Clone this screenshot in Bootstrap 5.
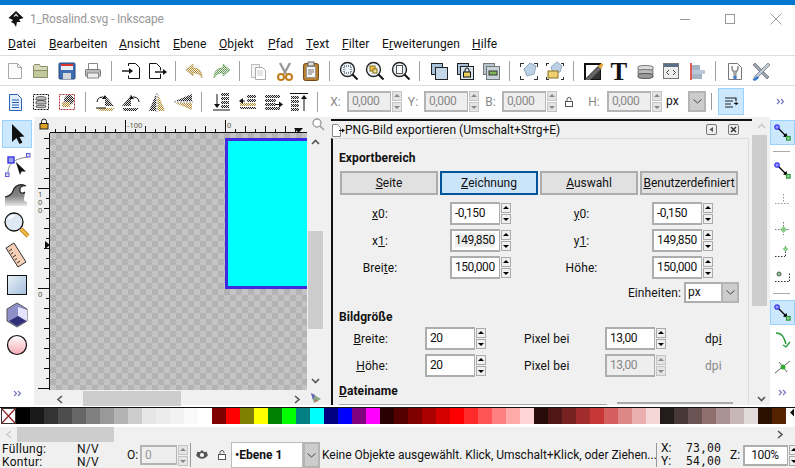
<!doctype html>
<html lang="de"><head><meta charset="utf-8"><title>1_Rosalind.svg - Inkscape</title>
<link href="https://cdn.jsdelivr.net/npm/bootstrap@5.3.0/dist/css/bootstrap.min.css" rel="stylesheet">
<script src="https://cdn.jsdelivr.net/npm/bootstrap@5.3.0/dist/js/bootstrap.bundle.min.js"></script>
<style>
html,body{margin:0;height:468px;overflow:hidden;background:#fff}
body{font:12px/16px Roboto,sans-serif;color:#111;width:795px;letter-spacing:.1px}
.defs{position:absolute;width:0;height:0}
svg{display:block;flex:none}
.winbar{height:5px;background:#0078d0}
.titlebar{height:28px;padding-left:8px}
.wintitle{color:#999;font-size:12px;margin-left:6px;letter-spacing:-.15px}
.winctl{width:45px;height:28px}
.winbtns{margin-right:-3px}
.menurow{height:23px;padding-left:8px;border-bottom:1px solid #ddd}
.tbar{height:30px;padding-left:2px;border-bottom:1px solid #ddd}
.tbar2{height:31px;border-bottom:0}
.tb{width:26px;height:26px;flex:none}
.tsep{width:12px;height:20px;flex:none}
.tsep::before{content:"";display:block;width:1px;height:20px;background:#a0a0a0;margin-left:5px}
.lab{color:#888;display:flex;justify-content:center;flex:none}
.w23{width:23px}.w22{width:22px}.w26{width:26px}.w24{width:24px}
.spf{height:21px;border:2px solid #b4b4b4;border-right-width:1px;background:#eee;color:#888;padding-left:3px;line-height:17px;width:44px;flex:none;letter-spacing:-.4px}
.spn{width:10px;height:21px;flex:none;display:flex;flex-direction:column;gap:1px;margin-left:1px}
.spn i{flex:1;background:#e4e4e4;border:1px solid #c4c4c4;position:relative;display:block}
.spn i::after{content:"";position:absolute;left:1px;border:3px solid transparent}
.spn i:first-child::after{border-bottom-color:#888;top:-1px}
.spn i:last-child::after{border-top-color:#888;top:3px}
.spn.on i{background:#f0f0f0;border-color:#aaa}
.spn.on i:first-child::after{border-bottom-color:#000}
.spn.on i:last-child::after{border-top-color:#000}
.cmbarrow{background:#ccc;border:2px solid #b4b4b4;display:flex;align-items:center;justify-content:center}
.mainarea{height:288px}
.toolcol{width:34px;padding-top:3px;position:relative}
.toolbtn{height:30px;width:34px}
.toolbtn.act{background:#cce8ff;outline:1px solid #99d1ff;outline-offset:-1px;width:30px;margin-left:2px;height:28px;margin-bottom:2px}
.canpane{width:296px;background:#f0f0f0;position:relative}
.rultop{height:13px;margin-top:3px;display:flex}
.canrow{height:257px;display:flex}
.checker{width:257px;height:257px;position:relative;overflow:hidden;background:repeating-conic-gradient(#b3b3b3 0 25%,#c4c4c4 0 50%) 0 0/12px 12px}
.cyanbox{position:absolute;left:175px;top:5px;width:100px;height:151px;background:#0ff;border:3px solid #3e2be0}
.vscroll{width:23px;padding:0 7px 0 1px;display:flex;flex-direction:column;align-items:center}
.vtrack{flex:1;width:15px;position:relative}
.thumb{background:#cdcdcd;position:absolute}
.hrow{height:16px;display:flex;position:relative;margin-top:1px}
.dlg{width:422px;background:#f0f0f0;position:relative;overflow:hidden}
.dlgbar{height:19px;margin-top:2px;border-top:2px solid #111;padding-left:14px;margin-left:1px;position:relative;letter-spacing:0}
.dlgbody{border-left:2px solid #111;margin-left:1px;height:268px;padding-left:6px;border-top:1px solid #ddd;margin-right:3px;border-right:1px solid #ddd}
.sect{font-weight:700;height:16px}
.xbtn{width:98px;height:24px;padding:0;font:12px/20px Roboto,sans-serif;border:2px solid #adadad;background:#e1e1e1;color:#111;border-radius:0}
.xbtn.sel{background:#cce4f7;border-color:#005499}
.gridA{display:grid;grid-template-columns:120px 61px 141px 61px;row-gap:4px;margin-left:-9px}
.gridB{display:grid;grid-template-columns:95px 61px 119px 61px 60px;row-gap:4px;margin-left:-9px}
.gcell{height:23px;display:flex;align-items:center}
.lblc{justify-content:center;padding-right:20px}
.lblc2{justify-content:center}
.lblr{justify-content:flex-end;padding-right:37px}
.sfield{display:flex;height:23px;width:61px}
.sval{width:50px;height:23px;background:#fff;border:2px solid #adadad;border-right-width:1px;padding-left:3px;line-height:19px;font-size:12px;flex:none;letter-spacing:-.45px}
.sval.off{background:#eee;color:#888}
.sfield .spn{height:21px;margin:1px 0 0 1px}
.hilite{background:#efefef}
.unitcmb{width:55px;height:21px;background:#fff;border:2px solid #adadad;padding-left:2px;line-height:17px;display:flex;margin-left:3px}
.scrollcol{width:18px;background:#f0f0f0;position:relative}
.snapcol{width:25px;padding-top:3px}
.snb{height:25px;width:25px;flex:none}
.snb.act{background:#cce8ff;outline:1px solid #99d1ff;outline-offset:-1px}
.sns{height:1px;background:#aaa;width:17px;margin-left:3px}
.pal{height:20px;padding:2px 0 0 0;position:relative}
.palin{height:17px;border-top:1px solid #111;display:flex;padding-left:1px}
.palin b{width:14px;height:16px;display:block;flex:none}
.hbar{height:17px;background:#f0f0f0;border-top:2px solid #fff;position:relative}
.stat{height:26px;background:#f0f0f0;position:relative;line-height:13px;font-size:12px}
.s-fill{width:127px;padding-left:2px;flex:none;letter-spacing:.3px;margin-top:1px}
.s-fill div{display:flex}.s-fill span{width:75px;flex:none}
.vsep{width:1px;height:24px;background:#999;flex:none}
.laycmb{width:72px;height:26px;background:#fff;border:1px solid #bbb;font-weight:700;padding-left:3px;line-height:24px;flex:none;letter-spacing:0}
.msg{white-space:nowrap;width:334px;flex:none;letter-spacing:-.02px}
.mono{font-family:"DejaVu Sans Mono",monospace;font-size:11.5px;letter-spacing:.1px}
.rtxt{font-family:"Noto Sans",sans-serif;font-size:7.5px;fill:#554;letter-spacing:0}
</style></head><body>
<svg class="defs"><defs>
<pattern id="dk" width="2" height="2" patternUnits="userSpaceOnUse"><rect width="2" height="2" fill="#ddd"/><rect width="1" height="1" fill="#222"/><rect x="1" y="1" width="1" height="1" fill="#222"/></pattern>
<pattern id="or" width="2" height="2" patternUnits="userSpaceOnUse"><rect width="2" height="2" fill="#eee"/><rect width="1" height="1" fill="#b8912e"/><rect x="1" y="1" width="1" height="1" fill="#b8912e"/></pattern>
<pattern id="gr" width="2" height="2" patternUnits="userSpaceOnUse"><rect width="2" height="2" fill="#eee"/><rect width="1" height="1" fill="#5e9b4e"/><rect x="1" y="1" width="1" height="1" fill="#5e9b4e"/></pattern>
<linearGradient id="gv" x1="0" y1="0" x2="0" y2="1"><stop offset="0" stop-color="#666"/><stop offset=".55" stop-color="#888"/><stop offset="1" stop-color="#e8e8e8"/></linearGradient>
<linearGradient id="gb" x1="0" y1="0" x2="1" y2="1"><stop offset="0" stop-color="#e8f0f8"/><stop offset="1" stop-color="#a3bfdc"/></linearGradient>
<linearGradient id="gp" x1="0" y1="0" x2="0" y2="1"><stop offset="0" stop-color="#fff"/><stop offset="1" stop-color="#f5aab4"/></linearGradient>
<symbol id="more" viewBox="0 0 9 7"><path d="M1 1l2.500 2.500L1 6M5 1l2.500 2.500L5 6" fill="none" stroke="#7878c0" stroke-width="1.200"/></symbol>
<symbol id="snp" viewBox="0 0 25 25"><path d="M8 8l8 8" stroke="#000" stroke-width="1.300"/><path d="M17.500 17.500l-4.500-1 3.500-3.500z" fill="#000"/><circle cx="7" cy="7" r="2.200" fill="#9a9aff" stroke="#3a3af0" stroke-width="1.300"/><rect x="16.500" y="16.500" width="3.600" height="3.600" fill="#9fd89f" stroke="#2a9a3a" stroke-width="1.200"/></symbol>
</defs></svg>

<div class="winbar"></div>
<div class="titlebar d-flex align-items-center">
 <svg width="16" height="17" viewBox="0 0 16 17"><path d="M8 0L15.500 7 11 8.500 12.500 11 9 11 8 16 6 12.500 3 11 5 9 .5 7z" fill="#111"/><path d="M8 2.500L5.500 5.500 7 5.500 8 4.300 9 5.500 10.500 5.500z" fill="#fff"/></svg>
 <span class="wintitle">1_Rosalind.svg - Inkscape</span>
 <div class="ms-auto d-flex winbtns">
  <div class="winctl d-flex align-items-center justify-content-center"><svg width="11" height="11"><path d="M0 5.500h10" stroke="#999"/></svg></div>
  <div class="winctl d-flex align-items-center justify-content-center"><svg width="11" height="11"><rect x=".5" y=".5" width="9" height="9" fill="none" stroke="#999"/></svg></div>
  <div class="winctl d-flex align-items-center justify-content-center"><svg width="12" height="12"><path d="M.5.500l11 11M11.500.500l-11 11" stroke="#999"/></svg></div>
 </div>
</div>
<div class="menurow d-flex align-items-center">
 <span style="width:41px"><u>D</u>atei</span><span style="width:70px"><u>B</u>earbeiten</span><span style="width:54px"><u>A</u>nsicht</span><span style="width:46px"><u>E</u>bene</span><span style="width:49px"><u>O</u>bjekt</span><span style="width:38px"><u>P</u>fad</span><span style="width:36px"><u>T</u>ext</span><span style="width:40px"><u>F</u>ilter</span><span style="width:90px">E<u>r</u>weiterungen</span><span><u>H</u>ilfe</span>
</div>

<div class="tbar d-flex align-items-center">
 <div class="tb"><svg width="26" height="26" viewBox="0 0 26 26"><path d="M6.500 5.500h9l4 4v11h-13z" fill="#fbfbfb" stroke="#aaa"/><path d="M15.500 5.500v4h4" fill="none" stroke="#aaa"/></svg></div>
 <div class="tb"><svg width="26" height="26" viewBox="0 0 26 26"><path d="M5.500 19.500v-12l1-1h5l1 2h7v11z" fill="#d5d9b8" stroke="#8a8f6a"/><path d="M5.500 19.500v-7h14v7z" fill="#c2c79c" stroke="#8a8f6a"/></svg></div>
 <div class="tb"><svg width="26" height="26" viewBox="0 0 26 26"><rect x="5" y="5" width="16" height="16" rx="1" fill="#3f6fb0" stroke="#24497c"/><rect x="7" y="6" width="12" height="6" fill="#e8eef5"/><rect x="7" y="6" width="12" height="2" fill="#d33"/><rect x="9" y="15" width="8" height="6" fill="#d6d6d6"/></svg></div>
 <div class="tb"><svg width="26" height="26" viewBox="0 0 26 26"><path d="M8.500 11.500v-6h9v6" fill="#fff" stroke="#888"/><rect x="5.500" y="11.500" width="15" height="7" rx="1" fill="#bbb" stroke="#777"/><rect x="7.500" y="15" width="11" height="5" fill="#eee" stroke="#888"/></svg></div>
 <div class="tsep"></div>
 <div class="tb"><svg width="26" height="26" viewBox="0 0 26 26"><path d="M10.500 8v-2.500h7l4 4v11h-11v-3" fill="#fff" stroke="#111"/><path d="M4 13h10" stroke="#111" stroke-width="1.400"/><path d="M15 13l-4-3v6z" fill="#111"/></svg></div>
 <div class="tb"><svg width="26" height="26" viewBox="0 0 26 26"><path d="M5.500 5.500h7l4 4v3M16.500 16v4.500h-11v-15" fill="#fff" stroke="#111"/><path d="M11 14h9" stroke="#111" stroke-width="1.400"/><path d="M23 14l-4-3v6z" fill="#111"/></svg></div>
 <div class="tsep"></div>
 <div class="tb"><svg width="26" height="26" viewBox="0 0 26 26"><path d="M4 12l7-6v4c6 0 9 3 9 10-2-4-5-5-9-5v3z" fill="url(#or)" stroke="#a98b3a" stroke-width=".5"/></svg></div>
 <div class="tb"><svg width="26" height="26" viewBox="0 0 26 26"><path d="M22 12l-7-6v4c-6 0-9 3-9 10 2-4 5-5 9-5v3z" fill="url(#gr)" stroke="#5e9b4e" stroke-width=".5"/></svg></div>
 <div class="tsep"></div>
 <div class="tb"><svg width="26" height="26" viewBox="0 0 26 26"><path d="M5.500 6.500h8v13h-8z" fill="#f5f5f5" stroke="#bbb"/><path d="M9.500 9.500h7l3 3v9h-10z" fill="#fff" stroke="#aaa"/><path d="M11 13h6M11 15h6M11 17h6" stroke="#ccc"/></svg></div>
 <div class="tb"><svg width="26" height="26" viewBox="0 0 26 26"><path d="M8 5l6 11M18 5l-6 11" stroke="#999" stroke-width="2.400"/><circle cx="9" cy="19" r="3" fill="#fff" stroke="#c07d1a" stroke-width="2"/><circle cx="17" cy="19" r="3" fill="#fff" stroke="#c07d1a" stroke-width="2"/></svg></div>
 <div class="tb"><svg width="26" height="26" viewBox="0 0 26 26"><rect x="5.500" y="5.500" width="15" height="17" rx="2" fill="#b8802f" stroke="#6e4a16"/><path d="M8.500 8.500h9v11h-9z" fill="#f7f7f7" stroke="#999"/><rect x="10" y="4" width="6" height="4" fill="#ddd" stroke="#666"/><path d="M10 12h6M10 14h6M10 16h4" stroke="#777"/></svg></div>
 <div class="tsep"></div>
 <div class="tb"><svg width="26" height="26" viewBox="0 0 26 26"><circle cx="11.500" cy="11.500" r="7" fill="#eaf2fa" stroke="#222" stroke-width="1.400"/><rect x="8" y="8" width="7" height="7" fill="none" stroke="#333" stroke-dasharray="1 1"/><path d="M16.500 16.500l5 5" stroke="#111" stroke-width="2"/></svg></div>
 <div class="tb"><svg width="26" height="26" viewBox="0 0 26 26"><circle cx="11.500" cy="11.500" r="7" fill="#eaf2fa" stroke="#222" stroke-width="1.400"/><rect x="8" y="8" width="5" height="5" fill="#f3c94b" stroke="#8a6d10"/><rect x="11" y="11" width="4" height="4" fill="#f6e39a" stroke="#8a6d10"/><path d="M16.500 16.500l5 5" stroke="#111" stroke-width="2"/></svg></div>
 <div class="tb"><svg width="26" height="26" viewBox="0 0 26 26"><circle cx="11.500" cy="11.500" r="7" fill="#eaf2fa" stroke="#222" stroke-width="1.400"/><rect x="8.500" y="7.500" width="6" height="8" fill="#fff" stroke="#555"/><path d="M16.500 16.500l5 5" stroke="#111" stroke-width="2"/></svg></div>
 <div class="tsep"></div>
 <div class="tb"><svg width="26" height="26" viewBox="0 0 26 26"><rect x="5.500" y="5.500" width="11" height="11" fill="#a9c2da" stroke="#222"/><rect x="9.500" y="9.500" width="12" height="12" fill="#c4d8ea" stroke="#222"/></svg></div>
 <div class="tb"><svg width="26" height="26" viewBox="0 0 26 26"><rect x="5.500" y="5.500" width="11" height="11" fill="#a9c2da" stroke="#222"/><rect x="8.500" y="8.500" width="13" height="13" fill="#d6e4f0" stroke="#222"/><rect x="11.500" y="14" width="7" height="5" fill="#e8d060" stroke="#111"/><path d="M13 14v-2a2 2 0 0 1 4 0v2" fill="none" stroke="#111"/></svg></div>
 <div class="tb"><svg width="26" height="26" viewBox="0 0 26 26"><rect x="5.500" y="5.500" width="11" height="11" fill="#b8c6d2" stroke="#777"/><rect x="8.500" y="8.500" width="13" height="13" fill="#c8d4dc" stroke="#777"/><rect x="11" y="13" width="8" height="4" fill="#7fb35a" stroke="#333"/></svg></div>
 <div class="tsep"></div>
 <div class="tb"><svg width="26" height="26" viewBox="0 0 26 26"><path d="M8 11l6-6 6 3-2 8-7 2z" fill="#bcd0e6" stroke="#90a6bf"/><path d="M4 5h4v1H5v3H4zM18 5h4v4h-1V6h-3zM4 18h1v3h3v1H4zM21 18h1v4h-4v-1h3z" fill="#333"/></svg></div>
 <div class="tb"><svg width="26" height="26" viewBox="0 0 26 26"><path d="M9 9l6-5 5 4-2 6-7 1z" fill="#bcd0e6" stroke="#90a6bf"/><rect x="6" y="13" width="10" height="7" fill="#f0d070" stroke="#8a7020"/><path d="M4 5h3v1H5v2H4zM19 5h3v3h-1V6h-2zM4 19h1v2h2v1H4zM21 19h1v3h-3v-1h2z" fill="#333"/></svg></div>
 <div class="tsep"></div>
 <div class="tb"><svg width="26" height="26" viewBox="0 0 26 26"><rect x="5" y="6" width="15" height="15" fill="#fff" stroke="#111" stroke-width="2"/><path d="M5 21L20 6v15z" fill="#333"/><path d="M5 22L19 8l3 2-12 12z" fill="#666"/><path d="M18 8l4-3 1.500 2-3 4z" fill="#e8a53a"/></svg></div>
 <div class="tb d-flex align-items-center justify-content-center"><svg width="26" height="26" viewBox="0 0 26 26"><text x="13" y="22" text-anchor="middle" font-family="Liberation Serif,serif" font-weight="700" font-size="25" fill="#111">T</text></svg></div>
 <div class="tb"><svg width="26" height="26" viewBox="0 0 26 26"><path d="M6 9c0-2 14-2 15 0v3H6z" fill="#ddd" stroke="#777"/><path d="M6 13c0-2 14-2 15 0v3H6z" fill="#bbb" stroke="#777"/><path d="M6 17c0-2 14-2 15 0v2c-1 2-15 2-15 0z" fill="#999" stroke="#555"/></svg></div>
 <div class="tb"><svg width="26" height="26" viewBox="0 0 26 26"><rect x="5.500" y="5.500" width="15" height="15" fill="#eee" stroke="#777"/><rect x="6" y="6" width="14" height="3" fill="#5c6f87"/><path d="M11 12l-2.500 2.500L11 17M15 12l2.500 2.500L15 17" fill="none" stroke="#444"/></svg></div>
 <div class="tb"><svg width="26" height="26" viewBox="0 0 26 26"><rect x="6" y="5" width="2" height="17" fill="#e05a5a"/><rect x="8" y="7" width="8" height="5" fill="#a5b5c5"/><rect x="8" y="12" width="13" height="4" fill="#b9c9d9"/><rect x="8" y="16" width="10" height="5" fill="#a5b5c5"/></svg></div>
 <div class="tsep"></div>
 <div class="tb"><svg width="26" height="26" viewBox="0 0 26 26"><path d="M6.500 5.500h9l4 4v12h-13z" fill="#fcfcfc" stroke="#777"/><path d="M10 8c0 4 1 5 3 5s3-1 3-5v4l-2 3v5h-2v-5l-2-3z" fill="#bbb" stroke="#555" stroke-width=".6"/><rect x="11.500" y="18" width="3" height="3" fill="#3a7fd0"/></svg></div>
 <div class="tb"><svg width="26" height="26" viewBox="0 0 26 26"><path d="M7 5l14 14-2 2L5 7z" fill="#9aa6b2" stroke="#555" stroke-width=".6"/><path d="M20 5l-13 13-2 4 4-2 13-13z" fill="#c2ccd6" stroke="#556" stroke-width=".6"/><path d="M5 22l4-4 2 2-4 3z" fill="#2f78d0"/></svg></div>
</div>

<div class="tbar tbar2 d-flex align-items-center">
 <div class="tb"><svg width="26" height="26" viewBox="0 0 26 26"><path d="M7.500 5.500h8l4 4v12h-12z" fill="#e3eefa" stroke="#2a62b5"/><path d="M10 11h7M10 13.500h7M10 16h7M10 18.500h7" stroke="#2a62b5"/></svg></div>
 <div class="tb"><svg width="26" height="26" viewBox="0 0 26 26"><rect x="5.500" y="5.500" width="15" height="15" fill="#fff" stroke="#111" stroke-dasharray="2 1"/><path d="M8 9c0-2 10-2 10 0v2H8zM8 13c0-2 10-2 10 0v2H8zM8 17c0-1 10-1 10 0v1c0 1-10 1-10 0z" fill="#bbb" stroke="#333" stroke-width=".7"/></svg></div>
 <div class="tb"><svg width="26" height="26" viewBox="0 0 26 26"><rect x="5.500" y="5.500" width="15" height="15" fill="#fff" stroke="#a33" stroke-dasharray="2 1"/><circle cx="15" cy="11" r="5" fill="url(#dk)"/><rect x="8" y="13" width="8" height="5" fill="url(#or)"/></svg></div>
 <div class="tsep"></div>
 <div class="tb"><svg width="26" height="26" viewBox="0 0 26 26"><path d="M13 6v11H22z" fill="url(#dk)"/><path d="M5 19h17l-2 3H8z" fill="url(#or)"/><path d="M5 13a5 5 0 0 1 8-4" fill="none" stroke="#111"/><path d="M13 6l1 4-4 0z" fill="#111"/><path d="M4 19h10" stroke="#111"/></svg></div>
 <div class="tb"><svg width="26" height="26" viewBox="0 0 26 26"><path d="M13 6v11H4z" fill="url(#dk)"/><path d="M21 19H4l2 3h12z" fill="url(#dk)"/><path d="M21 13a5 5 0 0 0-8-4" fill="none" stroke="#111"/><path d="M13 6l-1 4 4 0z" fill="#111"/></svg></div>
 <div class="tb"><svg width="26" height="26" viewBox="0 0 26 26"><path d="M12 5v17H5z" fill="url(#dk)"/><path d="M14 5v17h7z" fill="url(#or)"/><path d="M13 4v19" stroke="#888" stroke-dasharray="2 1"/></svg></div>
 <div class="tb"><svg width="26" height="26" viewBox="0 0 26 26"><path d="M5 12h17V5z" fill="url(#dk)"/><path d="M5 14h17v7z" fill="url(#or)"/><path d="M4 13h19" stroke="#888" stroke-dasharray="2 1"/></svg></div>
 <div class="tsep"></div>
 <div class="tb"><svg width="26" height="26" viewBox="0 0 26 26"><path d="M13 4h8v3h-8zM13 8h8v3h-8zM13 12h8v3h-8zM13 16h8v3h-8z" fill="url(#dk)"/><path d="M9 5v13" stroke="#111"/><path d="M9 19l-3-4h6z" fill="#111"/><path d="M5 21h17" stroke="#111"/></svg></div>
 <div class="tb"><svg width="26" height="26" viewBox="0 0 26 26"><path d="M13 6h9v3h-9zM13 10h9v3h-9zM6 18h16v2H6z" fill="url(#dk)"/><path d="M6 14h16v3H6z" fill="url(#or)"/><path d="M6 12h5" stroke="#111"/><path d="M5 12l4-3v6z" fill="#111"/></svg></div>
 <div class="tb"><svg width="26" height="26" viewBox="0 0 26 26"><path d="M5 6h15v3H5zM5 10h11v3H5zM5 14h11v3H5zM5 18h15v3H5z" fill="url(#dk)"/><path d="M16 15.500h4" stroke="#111"/><path d="M23 15.500l-4-3v6z" fill="#111"/></svg></div>
 <div class="tb"><svg width="26" height="26" viewBox="0 0 26 26"><path d="M5 7h8v3H5zM5 11h8v3H5zM5 15h8v3H5zM5 19h8v3H5z" fill="url(#dk)"/><path d="M4 4.500h18" stroke="#111"/><path d="M18 9v13" stroke="#111"/><path d="M18 6l-3 4h6z" fill="#111"/></svg></div>
 <div class="tsep"></div>
 <span class="lab w23">X:</span>
 <div class="spf">0,000</div><div class="spn"><i></i><i></i></div>
 <span class="lab w22">Y:</span>
 <div class="spf">0,000</div><div class="spn"><i></i><i></i></div>
 <span class="lab w23">B:</span>
 <div class="spf">0,000</div><div class="spn"><i></i><i></i></div>
 <div class="w24 d-flex justify-content-center flex-none"><svg width="10" height="12" viewBox="0 0 10 12"><rect x="1.500" y="5.500" width="7" height="5" fill="#fff" stroke="#555"/><path d="M3 5.500V3.500a2 2 0 0 1 4 0v1" fill="none" stroke="#555"/></svg></div>
 <span class="lab w26">H:</span>
 <div class="spf">0,000</div><div class="spn"><i></i><i></i></div>
 <div class="d-flex" style="height:21px;width:43px;background:#fff;margin-left:1px"><span style="padding:2px 0 0 3px;width:25px">px</span><div class="cmbarrow" style="width:18px"><svg width="9" height="5"><path d="M.5.500l4 3.500 4-3.500" fill="none" stroke="#444"/></svg></div></div>
 <div class="vsep" style="margin:0 6px 0 5px;height:17px"></div>
 <div class="tb d-flex align-items-center justify-content-center" style="background:#cce8ff;outline:1px solid #99d1ff;outline-offset:-1px;height:27px"><svg width="15" height="12" viewBox="0 0 15 12"><path d="M1 2h11v3M1 5h8M1 8h6M1 11h8" stroke="#222" stroke-width="1.200" fill="none"/><path d="M10 7.500h3" stroke="#222"/><path d="M14.500 7.500l-3-2v4z" fill="#222"/></svg></div>
 <svg class="ms-auto" style="margin-right:10px" width="9" height="7"><use href="#more"/></svg>
</div>

<div class="mainarea d-flex">
 <div class="toolcol d-flex flex-column">
  <div class="toolbtn act d-flex align-items-center justify-content-center"><svg width="18" height="24" viewBox="0 0 18 24"><path d="M4 2v18l4.500-4 3 6 3-1.500-3-5.500 5-.5z" fill="#111"/></svg></div>
  <div class="toolbtn d-flex align-items-center justify-content-center"><svg width="30" height="30" viewBox="0 0 30 30"><path d="M6 24c0-8 3-15 20-17" fill="none" stroke="#888"/><rect x="6" y="7" width="6" height="6" fill="#9ca0f0" stroke="#2a2ae0" stroke-width="1.300"/><rect x="24.500" y="3.500" width="3.500" height="3.500" fill="#ddd" stroke="#5a5ae0"/><rect x="3.500" y="23" width="3.500" height="3.500" fill="#ddd" stroke="#5a5ae0"/><path d="M13.700 11.700L24 21.600l-4.500-.1L18 25z" fill="#111"/></svg></div>
  <div class="toolbtn d-flex align-items-center justify-content-center"><svg width="26" height="26" viewBox="0 0 26 26"><path d="M1 24V15c5-1 7-3 8-6 2-6 8-8 13-5-3-1-7 1-6 5 0 2 3 3 5 1 0 2-1 5-1 7 0 2 1 3 3 3v4z" fill="url(#gv)"/><path d="M1 15c5-1 7-3 8-6 2-6 8-8 13-5-3-1-7 1-6 5 0 2 3 3 5 1" fill="none" stroke="#222" stroke-width="1.200"/></svg></div>
  <div class="toolbtn d-flex align-items-center justify-content-center"><svg width="28" height="28" viewBox="0 0 28 28"><circle cx="11" cy="11" r="9" fill="#dfe9f5" stroke="#111" stroke-width="1.300"/><path d="M6 8c1-2 3-3 5-3" stroke="#fff" stroke-width="2" fill="none"/><path d="M18 18l7 7" stroke="#b8791a" stroke-width="4"/><path d="M18 18l7 7" stroke="#f5c13e" stroke-width="2.400"/></svg></div>
  <div class="toolbtn d-flex align-items-center justify-content-center"><svg width="26" height="26" viewBox="0 0 26 26"><path d="M2 6l8-5 12 19-8 5z" fill="#f6cfb6" stroke="#333"/><path d="M5 9l3-2M7 12l2-1.500M9 15l3-2M11 18l2-1.500M13 21l3-2" stroke="#333"/></svg></div>
  <div class="toolbtn d-flex align-items-center justify-content-center"><svg width="22" height="22" viewBox="0 0 22 22"><rect x="1.500" y="1.500" width="19" height="19" fill="url(#gb)" stroke="#111"/></svg></div>
  <div class="toolbtn d-flex align-items-center justify-content-center"><svg width="24" height="26" viewBox="0 0 24 26"><path d="M12 1l10 6v12l-10 6L2 19V7z" fill="#9090c8" stroke="#555"/><path d="M13 5l9 3v11l-9-5z" fill="#e4e4ff"/><path d="M4 19l9-5 8 5-9 5z" fill="#30307a"/></svg></div>
  <div class="toolbtn d-flex align-items-center justify-content-center"><svg width="22" height="22" viewBox="0 0 22 22"><circle cx="11" cy="11" r="9.500" fill="url(#gp)" stroke="#111" stroke-width="1.200"/></svg></div>
  <svg class="mt-auto" style="margin:0 0 8px 13px" width="9" height="7"><use href="#more"/></svg>
 </div>

 <div class="canpane">
  <div class="rultop">
   <div style="width:16px;padding:0 0 0 2px"><svg style="margin:-2px 0 0 2px" width="12" height="12" viewBox="0 0 12 12"><rect x="2" y="5.500" width="8" height="5.500" fill="#e0a020" stroke="#222"/><path d="M3.500 5.500v-2a2.500 2.500 0 0 1 5 0v2" fill="none" stroke="#222"/></svg></div>
   <svg width="257" height="13" viewBox="0 0 257 13">
    <path d="M0 12.500h257" stroke="#111"/>
    <path d="M5.500 12V9M15.500 12V6M25.500 12V9M35.500 12V6M45.500 12V9M55.500 12V6M65.500 12V9M75.500 12V0M85.500 12V9M95.500 12V6M105.500 12V9M115.500 12V6M125.500 12V9M135.500 12V6M145.500 12V9M155.500 12V6M165.500 12V9M175.500 12V0M185.500 12V9M195.500 12V6M205.500 12V9M215.500 12V6M225.500 12V9M235.500 12V6M245.500 12V9" stroke="#111"/>
    <text class="rtxt" x="77" y="8">-100</text>
    <text class="rtxt" x="177" y="8">0</text>
    <path d="M244 8h9l-4.500 5z" fill="#111"/>
   </svg>
   <div style="width:23px"><svg style="margin:-3px 0 0 4px" width="14" height="14" viewBox="0 0 14 14"><circle cx="6" cy="6" r="4" fill="#fff" stroke="#999" stroke-width="1.300"/><path d="M9 9l4 4" stroke="#999" stroke-width="1.500"/></svg></div>
  </div>
  <div class="canrow">
   <svg width="16" height="257" viewBox="0 0 16 257">
    <path d="M15.500 0v257" stroke="#111"/>
    <path d="M10 5.500h5M12 15.500h3M10 25.500h5M12 35.500h3M10 45.500h5M4 55.500h11M12 65.500h3M10 75.500h5M12 85.500h3M10 95.500h5M12 105.500h3M10 115.500h5M12 125.500h3M10 135.500h5M12 145.500h3M4 155.500h11M12 165.500h3M10 175.500h5M12 185.500h3M10 195.500h5M12 205.500h3M10 215.500h5M12 225.500h3M10 235.500h5M12 245.500h3M4 255.500h11" stroke="#111"/>
    <text class="rtxt" x="4" y="64">1</text>
    <text class="rtxt" x="4" y="72">0</text>
    <text class="rtxt" x="4" y="80">0</text>
    <text class="rtxt" x="4" y="164">0</text>
    <path d="M11 108l5 4-5 4z" fill="#111"/>
   </svg>
   <div class="checker"><div class="cyanbox"></div></div>
   <div class="vscroll"><div class="vtrack">
     <svg style="margin:6px 0 0 3px" width="9" height="6"><path d="M1 5l3.500-3.500L8 5" fill="none" stroke="#555" stroke-width="1.600"/></svg>
     <div class="thumb" style="left:0;right:0;top:98px;height:98px"></div>
     <svg style="position:absolute;left:3px;bottom:6px" width="9" height="6"><path d="M1 1l3.500 3.500L8 1" fill="none" stroke="#555" stroke-width="1.600"/></svg>
   </div></div>
  </div>
  <div class="hrow">
   <svg style="position:absolute;left:22px;top:4px" width="7" height="9"><path d="M6 1L2 4.500 6 8" fill="none" stroke="#555" stroke-width="1.600"/></svg>
   <div class="thumb" style="left:49px;width:98px;top:0;height:15px"></div>
   <svg style="position:absolute;left:260px;top:4px" width="7" height="9"><path d="M1 1l4 3.500L1 8" fill="none" stroke="#555" stroke-width="1.600"/></svg>
   <svg style="position:absolute;left:276px;top:1px" width="12" height="12"><path d="M1 1l10 6-7 4z" fill="#8a8"/><path d="M1 1l4 2-2 5z" fill="#66b"/><path d="M5 7l3 2-3 1z" fill="#c66"/></svg>
  </div>
 </div>

 <div class="dlg">
  <div class="dlgbar d-flex align-items-center">
   <svg style="position:absolute;left:0;top:3px" width="14" height="13" viewBox="0 0 14 13"><path d="M1.500.500h5l3 3v9h-8z" fill="#fff" stroke="#888"/><path d="M8 6.500h5" stroke="#111"/><path d="M14 6.500l-3-2v4z" fill="#111"/></svg>
   <span>PNG-Bild exportieren (Umschalt+Strg+E)</span>
   <svg class="ms-auto" width="12" height="12" viewBox="0 0 12 12"><rect x=".5" y=".5" width="10" height="10" rx="1.500" fill="#eee" stroke="#777"/><path d="M3.500 5.500L7 3v5z" fill="#555"/></svg>
   <svg style="margin:0 12px 0 10px" width="12" height="12" viewBox="0 0 12 12"><rect x=".5" y=".5" width="10" height="10" rx="1.500" fill="#eee" stroke="#777"/><path d="M3 3l5 5M8 3L3 8" stroke="#333" stroke-width="1.500"/></svg>
  </div>
  <div class="dlgbody">
   <div class="sect" style="margin-top:11px">Exportbereich</div>
   <div class="d-flex" style="margin:5px 0 7px 1px;gap:2px">
    <button class="btn xbtn" type="button"><u>S</u>eite</button><button class="btn xbtn sel" type="button"><u>Z</u>eichnung</button><button class="btn xbtn" type="button"><u>A</u>uswahl</button><button class="btn xbtn" type="button"><u>B</u>enutzerdefiniert</button>
   </div>
   <div class="gridA">
    <div class="gcell lblc"><span><u>x</u>0:</span></div><div class="sfield"><div class="sval">-0,150</div><div class="spn on"><i></i><i></i></div></div><div class="gcell lblc2"><span><u>y</u>0:</span></div><div class="sfield"><div class="sval">-0,150</div><div class="spn on"><i></i><i></i></div></div>
    <div class="gcell lblc"><span>x<u>1</u>:</span></div><div class="sfield"><div class="sval"><span class="hilite">149,850</span></div><div class="spn on"><i></i><i></i></div></div><div class="gcell lblc2"><span>y<u>1</u>:</span></div><div class="sfield"><div class="sval">149,850</div><div class="spn on"><i></i><i></i></div></div>
    <div class="gcell lblc"><span>Brei<u>t</u>e:</span></div><div class="sfield"><div class="sval">150,000</div><div class="spn on"><i></i><i></i></div></div><div class="gcell lblc2"><span>Höhe:</span></div><div class="sfield"><div class="sval">150,000</div><div class="spn on"><i></i><i></i></div></div>
   </div>
   <div class="d-flex align-items-center justify-content-end" style="margin:3px 9px 0 0;height:21px">
    <span>Einheiten:</span><div class="unitcmb"><span style="flex:1">px</span><div class="cmbarrow" style="width:18px;margin:-2px -2px -2px 0"><svg width="9" height="5"><path d="M.5.500l4 3.500 4-3.500" fill="none" stroke="#444"/></svg></div></div>
   </div>
   <div class="sect" style="margin:6px 0 2px">Bildgröße</div>
   <div class="gridB">
    <div class="gcell lblr"><span><u>B</u>reite:</span></div><div class="sfield"><div class="sval">20</div><div class="spn on"><i></i><i></i></div></div><div class="gcell" style="padding-left:38px">Pixel bei</div><div class="sfield"><div class="sval">13,00</div><div class="spn on"><i></i><i></i></div></div><div class="gcell" style="padding-left:39px">dp<u>i</u></div>
    <div class="gcell lblr"><span><u>H</u>öhe:</span></div><div class="sfield"><div class="sval">20</div><div class="spn on"><i></i><i></i></div></div><div class="gcell" style="padding-left:38px">Pixel bei</div><div class="sfield"><div class="sval off">13,00</div><div class="spn"><i></i><i></i></div></div><div class="gcell" style="padding-left:39px;color:#888">dpi</div>
   </div>
   <div class="sect" style="margin-top:6px"><u>D</u>ateiname</div>
   <div class="d-flex" style="margin-top:3px"><div style="width:268px;height:2px;margin-top:2px;background:#aaa"></div><div style="margin-left:10px;width:116px;height:2px;background:#aaa"></div></div>
  </div>
 </div>

 <div class="scrollcol">
  <svg style="position:absolute;left:5px;top:6px" width="9" height="6"><path d="M1 5l3.500-3.500L8 5" fill="none" stroke="#ccc" stroke-width="1.600"/></svg>
  <div class="thumb" style="left:0;width:15px;top:18px;height:171px"></div>
  <svg style="position:absolute;left:5px;bottom:3px" width="9" height="6"><path d="M1 1l3.500 3.500L8 1" fill="none" stroke="#555" stroke-width="1.600"/></svg>
 </div>
 <div class="snapcol d-flex flex-column">
  <div class="snb act"><svg width="25" height="25"><use href="#snp"/></svg></div>
  <div class="sns" style="margin-top:6px"></div>
  <div class="snb" style="margin-top:6px"><svg width="25" height="25"><use href="#snp"/></svg></div>
  <div class="snb" style="margin-top:3px"><svg width="25" height="25" viewBox="0 0 25 25"><path d="M5 17.500h14M13.500 8v9" stroke="#9a9a8a" stroke-dasharray="1.500 1.500"/></svg></div>
  <div class="snb" style="margin-top:3px"><svg width="25" height="25" viewBox="0 0 25 25"><path d="M5 15.500h14M13.500 8v13" stroke="#777" stroke-dasharray="1.500 1.500"/><rect x="11" y="13" width="5" height="5" transform="rotate(45 13.500 15.500)" fill="#8c8"/></svg></div>
  <div class="snb" style="margin-top:-1px"><svg width="25" height="25" viewBox="0 0 25 25"><path d="M5 18.500h10M15.500 18V8" stroke="#333" stroke-dasharray="1.500 1.500"/><rect x="13.500" y="9" width="4" height="4" transform="rotate(45 15.500 11)" fill="#8c8"/></svg></div>
  <div class="snb" style="margin-top:0"><svg width="25" height="25" viewBox="0 0 25 25"><path d="M5 18.500h14M19.500 18V9" stroke="#333" stroke-dasharray="1.500 1.500"/><circle cx="9" cy="11" r="2" fill="#8c8" stroke="#555"/></svg></div>
  <div class="sns" style="margin-top:5px"></div>
  <div class="snb act" style="margin-top:6px"><svg width="25" height="25"><use href="#snp"/></svg></div>
  <div class="snb" style="margin-top:3px"><svg width="25" height="25" viewBox="0 0 25 25"><path d="M6 5c6 0 8 4 10 11" fill="none" stroke="#2a9a3a" stroke-width="1.500"/><path d="M13 17l3 2 4-5" fill="none" stroke="#2a9a3a" stroke-width="1.300"/></svg></div>
  <div class="snb" style="margin-top:0"><svg width="25" height="25" viewBox="0 0 25 25"><path d="M5 20L20 8M9 9l8 10" stroke="#666"/><circle cx="13" cy="14" r="2.500" fill="#3a3"/></svg></div>
  <svg class="mt-auto" style="margin:0 0 9px 8px" width="9" height="7"><use href="#more"/></svg>
 </div>
</div>

<div class="pal">
 <div class="palin">
  <svg width="15" height="16" viewBox="0 0 15 16"><rect x=".5" y=".5" width="14" height="15" fill="#fff" stroke="#333"/><path d="M1 1l13 14M14 1L1 15" stroke="#8b2020" stroke-width="1.200"/></svg>
  <b style="background:#000"></b><b style="background:#1a1a1a"></b><b style="background:#333"></b><b style="background:#4d4d4d"></b><b style="background:#666"></b><b style="background:#808080"></b><b style="background:#999"></b><b style="background:#b3b3b3"></b><b style="background:#ccc"></b><b style="background:#e6e6e6"></b><b style="background:#ececec"></b><b style="background:#f2f2f2"></b><b style="background:#f9f9f9"></b><b style="background:#fff"></b>
  <b style="background:#800000"></b><b style="background:#f00"></b><b style="background:#808000"></b><b style="background:#ff0"></b><b style="background:#008000"></b><b style="background:#0f0"></b><b style="background:#008080"></b><b style="background:#0ff"></b><b style="background:#000080"></b><b style="background:#00f"></b><b style="background:#800080"></b><b style="background:#f0f"></b>
  <b style="background:#2b0000"></b><b style="background:#500"></b><b style="background:#800000"></b><b style="background:#a00"></b><b style="background:#d40000"></b><b style="background:#f00"></b><b style="background:#ff2a2a"></b><b style="background:#f55"></b><b style="background:#ff8080"></b><b style="background:#faa"></b><b style="background:#ffd5d5"></b>
  <b style="background:#280b0b"></b><b style="background:#501616"></b><b style="background:#782121"></b><b style="background:#a02c2c"></b><b style="background:#c83737"></b><b style="background:#d35f5f"></b><b style="background:#de8787"></b><b style="background:#e9afaf"></b><b style="background:#f4d7d7"></b>
  <b style="background:#241c1c"></b><b style="background:#483737"></b><b style="background:#6c5353"></b><b style="background:#916f6f"></b><b style="background:#ac9393"></b><b style="background:#c8b7b7"></b><b style="background:#e3dbdb"></b>
  <b style="background:#2b1100"></b><b style="background:#520"></b>
  <svg style="margin-left:3px" width="6" height="9"><path d="M5 .5L1 4.500 5 8.500z" fill="#111"/></svg>
 </div>
</div>
<div class="hbar">
 <svg style="position:absolute;left:5px;top:3px" width="7" height="9"><path d="M6 1L2 4.500 6 8" fill="none" stroke="#ccc" stroke-width="1.600"/></svg>
 <div class="thumb" style="left:17px;width:97px;top:0;height:15px"></div>
 <svg style="position:absolute;left:777px;top:3px" width="7" height="9"><path d="M1 1l4 3.500L1 8" fill="none" stroke="#555" stroke-width="1.600"/></svg>
</div>
<div class="stat d-flex align-items-center">
 <div class="s-fill"><div><span>Füllung:</span><span>N/V</span></div><div><span>Kontur:</span><span>N/V</span></div></div>
 <span style="width:13px;flex:none">O:</span>
 <div class="spf" style="width:37px;height:20px;line-height:16px;color:#999">0</div><div class="spn"><i></i><i></i></div>
 <div class="vsep" style="margin:0 0 0 2px"></div>
 <div style="width:22px;display:flex;justify-content:center;flex:none"><svg width="14" height="10" viewBox="0 0 14 10"><path d="M1 5c3-5 9-5 12 0-3 5-9 5-12 0z" fill="#555"/><circle cx="7" cy="5" r="2" fill="#fff"/><path d="M2 2l2 1M7 0v2M12 2l-2 1" stroke="#333"/></svg></div>
 <div style="width:18px;display:flex;justify-content:center;flex:none"><svg width="10" height="12" viewBox="0 0 10 12"><rect x="1.500" y="5.500" width="7" height="5" fill="#fff" stroke="#555"/><path d="M3 5.500V3.500a2 2 0 0 1 4 0v1" fill="none" stroke="#555"/></svg></div>
 <div class="laycmb">•Ebene 1</div>
 <div class="cmbarrow" style="width:17px;height:26px;flex:none"><svg width="9" height="5"><path d="M.5.500l4 3.500 4-3.500" fill="none" stroke="#444"/></svg></div>
 <span class="msg" style="margin-left:2px">Keine Objekte ausgewählt. Klick, Umschalt+Klick, oder Ziehen...</span>
 <div class="vsep"></div>
 <div style="margin-left:4px;width:25px;flex:none"><div>X:</div><div>Y:</div></div>
 <div class="mono" style="width:44px;flex:none"><div>73,00</div><div>54,00</div></div>
 <span style="flex:none">Z:</span>
 <div class="sval" style="width:45px;height:21px;margin-left:3px;line-height:17px;padding-left:6px">100%</div><div class="spn on" style="height:21px;width:9px"><i></i><i></i></div>
</div>
</body></html>
